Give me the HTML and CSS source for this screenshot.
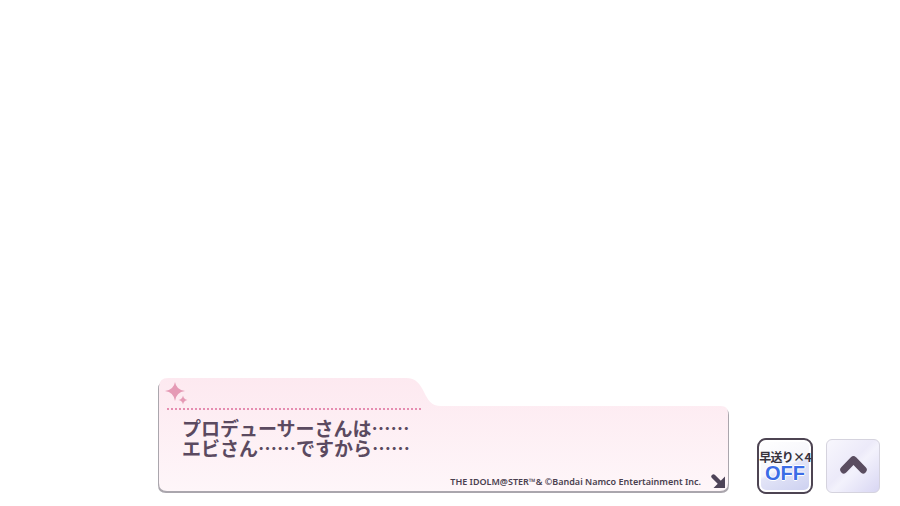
FILE: index.html
```html
<!DOCTYPE html>
<html lang="ja">
<head>
<meta charset="utf-8">
<title>会話</title>
<link rel="stylesheet" href="styles.css">
</head>
<body>
<div class="stage">
  <div class="dialog">
    <svg class="frame" viewBox="0 0 571 116" width="571" height="116" aria-hidden="true">
      <defs>
        <linearGradient id="boxFill" x1="0" y1="0" x2="0" y2="1">
          <stop offset="0" stop-color="#fde9f0"/>
          <stop offset="1" stop-color="#fef6f9"/>
        </linearGradient>
      </defs>
      <path class="frame-shadow" d="M0,11 Q0,3 9,3 L248,3 C258,3 262,8 266,16 C270,24 273,30 283,30 L564,30 Q571,30 571,37 L571,107 Q571,115 563,115 L8,115 Q0,115 0,107 Z"/>
      <path d="M1,9 Q1,0 10,0 L248,0 C258,0 262,6 266,14 C270,22 273,28 283,28 L563,28 Q570,28 570,35 L570,105 Q570,113 562,113 L9,113 Q1,113 1,105 Z" fill="url(#boxFill)"/>
    </svg>
    <svg class="sparkle" viewBox="0 0 24 24" width="24" height="24" aria-hidden="true">
      <path d="M10 1 Q11.2 8.8 20 10 Q11.2 11.2 10 20 Q8.8 11.2 0 10 Q8.8 8.8 10 1 Z"/>
      <path d="M18 14.5 Q18.6 18.4 22.5 19 Q18.6 19.6 18 23.5 Q17.4 19.6 13.5 19 Q17.4 18.4 18 14.5 Z"/>
    </svg>
    <div class="dots"></div>
    <p class="lines">プロデューサーさんは……<br>エビさん……ですから……</p>
    <div class="foot">
      <span class="credit">THE IDOLM@STER™&amp; ©Bandai Namco Entertainment Inc.</span>
      <svg class="next" viewBox="0 0 14 14" width="14" height="14" aria-hidden="true">
        <path d="M2.5 2.5 L9 9" stroke="#4e4458" stroke-width="4.4" stroke-linecap="round"/>
        <path d="M14 2.5 L14 14 L2.5 14 Z" fill="#4e4458"/>
      </svg>
    </div>
  </div>

  <button class="btn-ff" type="button">
    <span class="ff-label">早送り×4</span>
    <span class="ff-state">OFF</span>
  </button>

  <button class="btn-up" type="button" aria-label="上へ">
    <svg viewBox="0 0 54 54" width="52" height="52" aria-hidden="true">
      <polyline points="17.5,31 27.5,20.5 37.5,31" fill="none" stroke="#5a4d60" stroke-width="7.5" stroke-linecap="round" stroke-linejoin="round"/>
    </svg>
  </button>
</div>
</body>
</html>
```
FILE: styles.css
```css
html, body {
  margin: 0;
  padding: 0;
  background: #ffffff;
}

.stage {
  width: 900px;
  height: 506px;
  box-sizing: border-box;
  display: flex;
  align-items: flex-end;
  padding: 0 0 12px 158px;
}

/* message window */
.dialog {
  position: relative;
  width: 571px;
  height: 116px;
  display: flex;
  flex-direction: column;
  flex-shrink: 0;
}

.frame {
  position: absolute;
  left: 0;
  top: 0;
}

.frame-shadow {
  fill: #aaa6ad;
}

.sparkle {
  position: relative;
  display: block;
  margin: 3px 0 0 7px;
  fill: #e59ab5;
}

.dots {
  position: relative;
  margin: 3px 0 0 9px;
  width: 256px;
  height: 2px;
  background-image: linear-gradient(to right, #e58db0 2px, transparent 2px);
  background-size: 4px 2px;
}

.lines {
  position: relative;
  margin: 8px 0 0 24px;
  font-family: "Noto Sans CJK JP", "Noto Sans", sans-serif;
  font-weight: 700;
  font-size: 19px;
  line-height: 20px;
  color: #5b4a60;
}

.foot {
  position: relative;
  margin-top: auto;
  display: flex;
  align-items: center;
  justify-content: flex-end;
  padding: 0 4px 6px 0;
}

.credit {
  font-family: "Noto Sans", "DejaVu Sans", sans-serif;
  font-weight: 600;
  font-size: 9px;
  color: #4a3f4f;
  margin-right: 10px;
}

.next {
  display: block;
}

/* fast-forward toggle */
.btn-ff {
  margin-left: 28px;
  width: 56px;
  height: 56px;
  box-sizing: border-box;
  padding: 0;
  border: 2px solid #4d4452;
  border-radius: 9px;
  background: linear-gradient(155deg, #ffffff 0%, #f6f6fb 50%, #e3e5f7 54%, #cbcff0 100%);
  box-shadow: inset 0 0 0 2px #ffffff;
  display: flex;
  flex-direction: column;
  align-items: center;
  justify-content: center;
  flex-shrink: 0;
}

.ff-label {
  font-family: "Noto Sans CJK JP", sans-serif;
  font-weight: 700;
  font-size: 12px;
  line-height: 15px;
  letter-spacing: -0.7px;
  color: #36323c;
}

.ff-state {
  font-family: "Liberation Sans", Arial, sans-serif;
  font-weight: 700;
  font-size: 20px;
  line-height: 19px;
  color: #3b6ce6;
  text-shadow: 1px 0 #fff, -1px 0 #fff, 0 1px #fff, 0 -1px #fff;
}

/* scroll-up button */
.btn-up {
  margin: 0 0 1px 13px;
  width: 54px;
  height: 54px;
  box-sizing: border-box;
  padding: 0;
  border: 1px solid #d5d3de;
  border-radius: 6px;
  background: linear-gradient(135deg, #f8f7fd 0%, #eceaf9 45%, #f3f2fc 55%, #d8d6f3 100%);
  display: flex;
  align-items: center;
  justify-content: center;
  flex-shrink: 0;
}

.btn-up svg {
  display: block;
}
```
